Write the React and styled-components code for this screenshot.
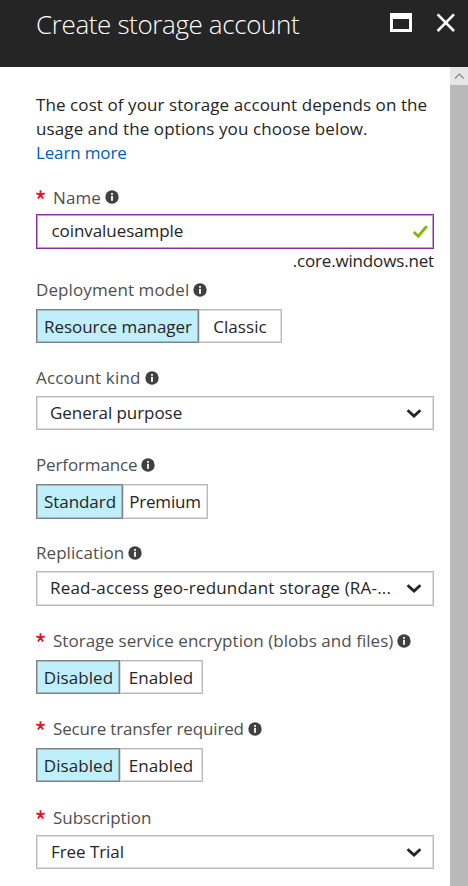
import React from "react";
import styled, { createGlobalStyle } from "styled-components";

const GlobalStyle = createGlobalStyle`
  * { box-sizing: border-box; }
  body {
    margin: 0;
    background: #fff;
    font: 17px/24px "Open Sans", "Noto Sans", sans-serif;
    color: #252525;
  }
`;

const Blade = styled.div`
  display: flex;
  flex-direction: column;
  width: 468px;
  height: 886px;
  overflow: hidden;
`;

const Header = styled.header`
  display: flex;
  flex: none;
  height: 67px;
  padding: 6px 13px 0 36px;
  background: #252525;
  color: #fff;
`;

const Title = styled.h1`
  flex: 1;
  margin: 0;
  font-size: 26px;
  line-height: 36px;
  font-weight: 300;
  letter-spacing: -0.38px;
  white-space: nowrap;
`;

const WindowButton = styled.button`
  display: block;
  height: 22px;
  margin: 6px 0 0 ${(p) => p.$gap || 0}px;
  padding: 0;
  border: 0;
  background: none;
  svg { display: block; }
`;

const Body = styled.div`
  display: flex;
  flex: 1;
  min-height: 0;
`;

const Form = styled.main`
  flex: 1;
  padding: 26px 16px 0 36px;
`;

const Intro = styled.p`
  height: 93px;
  margin: 0;
  white-space: nowrap;
`;

const Line = styled.span`
  display: block;
  letter-spacing: ${(p) => p.$track || 0}px;
`;

const Link = styled.a`
  display: block;
  color: #015cb8;
  letter-spacing: -0.15px;
`;

const Field = styled.section`
  display: flex;
  flex-direction: column;
  align-items: flex-start;
  height: ${(p) => p.$height}px;
`;

const LabelRow = styled.div`
  display: flex;
  align-items: center;
  flex: none;
  height: ${(p) => p.$height}px;
  padding-bottom: ${(p) => p.$height - 24}px;
  color: #4f4f4f;
  white-space: nowrap;
`;

const LabelText = styled.span`
  letter-spacing: ${(p) => p.$track || 0}px;
  margin-right: 4px;
`;

const Required = styled.svg`
  display: block;
  width: 9px;
  height: 9px;
  margin: 0 8px 7px 0;
`;

const InfoSvg = styled.svg`
  display: block;
  flex: none;
  width: 14px;
  height: 14px;
  margin-bottom: ${(p) => (p.$raised ? 2 : 0)}px;
`;

const Control = styled.div`
  display: flex;
  align-items: center;
  justify-content: space-between;
  flex: none;
  width: 398px;
  height: ${(p) => p.$height || 34}px;
  padding: 0 ${(p) => p.$right || 11}px 1px ${(p) => p.$left || 13}px;
  border: 1px solid ${(p) => (p.$focused ? "#862fa5" : "#bababa")};
  box-shadow: inset 0 0 0 1px ${(p) => (p.$focused ? "#c79bd6" : "#dedede")};
  letter-spacing: ${(p) => p.$track || 0}px;
  white-space: nowrap;
`;

const Suffix = styled.div`
  align-self: flex-end;
  letter-spacing: -0.16px;
`;

const Toggle = styled.div`
  display: flex;
  flex: none;
`;

const Option = styled.button`
  width: ${(p) => p.$width}px;
  height: ${(p) => p.$height || 34}px;
  padding: 1px 0 0 ${(p) => (p.$selected ? 1 : 0)}px;
  border: 1px solid ${(p) => (p.$selected ? "#808080" : "#bababa")};
  border-left-width: ${(p) => (p.$selected ? 1 : 0)}px;
  box-shadow: inset 0 0 0 1px ${(p) => (p.$selected ? "#9dbdc5" : "#dedede")};
  background: ${(p) => (p.$selected ? "#bfeffb" : "#fff")};
  color: #252525;
  font: inherit;
  letter-spacing: ${(p) => p.$track || 0}px;
  white-space: nowrap;
`;

const Scrollbar = styled.aside`
  width: 18px;
  background: #b9b9b9;
`;

const ScrollUp = styled.div`
  height: 18px;
  background: #e6e6e6;
  svg { display: block; }
`;

const InfoIcon = ({ raised }) => (
  <InfoSvg viewBox="0 0 14 14" $raised={raised}>
    <circle cx="7" cy="7" r="6.7" fill="#404040" />
    <rect x="6.1" y="3" width="1.8" height="1.8" fill="#fff" />
    <rect x="6.1" y="5.8" width="1.8" height="5" fill="#fff" />
  </InfoSvg>
);

const Chevron = () => (
  <svg width="16" height="12" viewBox="0 0 16 12">
    <path d="M1.6 3.2 8 9l6.4-5.8" fill="none" stroke="#252525" strokeWidth="2.8" />
  </svg>
);

const Label = ({ text, track, height = 30, required, info = true, raised }) => (
  <LabelRow $height={height}>
    {required && (
      <Required viewBox="0 0 9 9">
        <path
          d="M4.5 4.7V0.2M4.5 4.7 0.3 3.4M4.5 4.7 8.7 3.4M4.5 4.7 1.9 8.5M4.5 4.7 7.1 8.5"
          stroke="#e81123"
          strokeWidth="1.8"
        />
      </Required>
    )}
    <LabelText $track={track}>{text}</LabelText>
    {info && <InfoIcon raised={raised} />}
  </LabelRow>
);

const Options = ({ items, height }) => (
  <Toggle>
    {items.map(([text, width, track], i) => (
      <Option key={text} $width={width} $track={track} $height={height} $selected={i === 0}>
        {text}
      </Option>
    ))}
  </Toggle>
);

const onOff = [["Disabled", 84, 0.08], ["Enabled", 83, 0.07]];

export default function App() {
  return (
    <Blade>
      <GlobalStyle />
      <Header>
        <Title>Create storage account</Title>
        <WindowButton aria-label="Maximize">
          <svg width="22" height="22" viewBox="0 0 22 22">
            <path d="M0 1h22v19H0zM3 7v10h16V7z" fill="#fff" fillRule="evenodd" />
          </svg>
        </WindowButton>
        <WindowButton aria-label="Close" $gap={24}>
          <svg width="19" height="22" viewBox="0 0 19 22">
            <path d="M1.6 2.4 18 19M18 2.4 1.6 19" stroke="#fff" strokeWidth="2.6" />
          </svg>
        </WindowButton>
      </Header>
      <Body>
        <Form>
          <Intro>
            <Line $track={0.085}>The cost of your storage account depends on the</Line>
            <Line $track={0.112}>usage and the options you choose below.</Line>
            <Link>Learn more</Link>
          </Intro>
          <Field $height={92}>
            <Label text="Name" track={0.12} height={28} required raised />
            <Control $height={35} $left={14.5} $right={5} $track={-0.07} $focused>
              coinvaluesample
              <svg width="16" height="14" viewBox="0 0 16 14">
                <path d="M1.8 8 6.3 12.2 14.8 2.2" fill="none" stroke="#7fba00" strokeWidth="2.8" />
              </svg>
            </Control>
            <Suffix>.core.windows.net</Suffix>
          </Field>
          <Field $height={88}>
            <Label text="Deployment model" track={0.1} height={31} />
            <Options items={[["Resource manager", 163, -0.045], ["Classic", 83, 0.06]]} />
          </Field>
          <Field $height={87}>
            <Label text="Account kind" track={0.16} />
            <Control $track={-0.06}>General purpose<Chevron /></Control>
          </Field>
          <Field $height={88}>
            <Label text="Performance" track={-0.13} height={31} />
            <Options height={35} items={[["Standard", 87, -0.05], ["Premium", 85, -0.19]]} />
          </Field>
          <Field $height={88}>
            <Label text="Replication" track={0.06} />
            <Control $height={35} $track={0.19}>
              Read-access geo-redundant storage (RA-...<Chevron />
            </Control>
          </Field>
          <Field $height={88}>
            <Label text="Storage service encryption (blobs and files)" track={0.04} height={31} required />
            <Options items={onOff} />
          </Field>
          <Field $height={89}>
            <Label text="Secure transfer required" track={-0.15} height={31} required />
            <Options items={onOff} />
          </Field>
          <Field $height={80}>
            <Label text="Subscription" track={-0.056} height={29} required info={false} />
            <Control $left={14} $track={-0.06}>Free Trial<Chevron /></Control>
          </Field>
        </Form>
        <Scrollbar>
          <ScrollUp>
            <svg width="18" height="18" viewBox="0 0 18 18">
              <path d="M5 11.5 9.3 7.2l4.3 4.3" fill="none" stroke="#858585" strokeWidth="1.2" />
            </svg>
          </ScrollUp>
        </Scrollbar>
      </Body>
    </Blade>
  );
}
